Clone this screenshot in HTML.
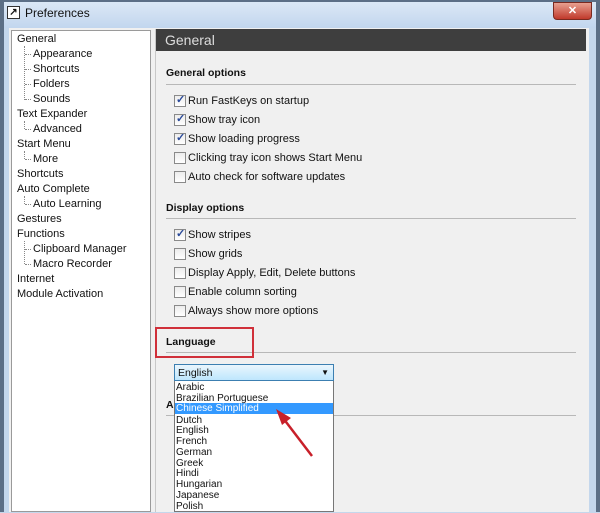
<!DOCTYPE html><html><head><style>
*{margin:0;padding:0;box-sizing:border-box}
body{width:600px;height:512px;overflow:hidden;position:relative;background:#c4d7ec;font-family:"Liberation Sans",sans-serif;font-size:11px;color:#111}
.a{position:absolute;white-space:nowrap}
.cb{position:absolute;width:12px;height:12px;border:1px solid #8a8a8a;background:linear-gradient(#ececec,#fff);margin-top:1px}
.cb.c::after{content:"✓";position:absolute;left:1px;top:-3px;font-size:11px;color:#2a4a9a;font-weight:bold}
.t{position:absolute;white-space:nowrap;font-size:11px;margin-top:1px}
.ln{position:absolute;border-top:1px dotted #888;width:6px;margin-top:1px}
.vl{position:absolute;border-left:1px dotted #888}
.h{position:absolute;font-weight:bold;font-size:10.5px}
.hr{position:absolute;height:1px;background:#b8b8b8;left:166px;width:410px}
.li{position:absolute;left:176px;font-size:10px;line-height:10.8px;margin-top:1px}
</style></head><body>
<div class="a" style="left:0;top:0;width:4px;height:512px;background:#5c6f86"></div>
<div class="a" style="left:596px;top:0;width:4px;height:512px;background:#5c6f86"></div>
<div class="a" style="left:0;top:0;width:600px;height:2px;background:#5c6f86"></div>
<div class="a" style="left:4px;top:2px;width:592px;height:26px;background:linear-gradient(#dbe8f6,#c2d6ee)"></div>
<div class="a" style="left:7px;top:6px;width:13px;height:13px;border:1px solid #333;background:#fff;font-size:10px;line-height:11px;text-align:center;font-weight:bold">↗</div>
<div class="a" style="left:25px;top:6px;font-size:12px">Preferences</div>
<div class="a" style="left:553px;top:2px;width:39px;height:18px;background:linear-gradient(#e8a090,#c0392b);border:1px solid #7a2a20;border-radius:0 0 4px 4px;color:#fff;text-align:center;font-weight:bold;font-size:11px;line-height:16px">✕</div>
<div class="a" style="left:9px;top:28px;width:580px;height:484px;background:#f0f0f0"></div>
<div class="a" style="left:11px;top:30px;width:140px;height:482px;background:#fff;border:1px solid #9a9a9a"></div>
<div class="t" style="left:17px;top:32px">General</div>
<div class="vl" style="left:24px;top:46px;height:54px"></div>
<div class="ln" style="left:25px;top:53px"></div><div class="t" style="left:33px;top:47px">Appearance</div>
<div class="ln" style="left:25px;top:68px"></div><div class="t" style="left:33px;top:62px">Shortcuts</div>
<div class="ln" style="left:25px;top:83px"></div><div class="t" style="left:33px;top:77px">Folders</div>
<div class="ln" style="left:25px;top:98px"></div><div class="t" style="left:33px;top:92px">Sounds</div>
<div class="t" style="left:17px;top:107px">Text Expander</div>
<div class="vl" style="left:24px;top:121px;height:8px"></div>
<div class="ln" style="left:25px;top:128px"></div><div class="t" style="left:33px;top:122px">Advanced</div>
<div class="t" style="left:17px;top:137px">Start Menu</div>
<div class="vl" style="left:24px;top:151px;height:8px"></div>
<div class="ln" style="left:25px;top:158px"></div><div class="t" style="left:33px;top:152px">More</div>
<div class="t" style="left:17px;top:167px">Shortcuts</div>
<div class="t" style="left:17px;top:182px">Auto Complete</div>
<div class="vl" style="left:24px;top:196px;height:8px"></div>
<div class="ln" style="left:25px;top:203px"></div><div class="t" style="left:33px;top:197px">Auto Learning</div>
<div class="t" style="left:17px;top:212px">Gestures</div>
<div class="t" style="left:17px;top:227px">Functions</div>
<div class="vl" style="left:24px;top:241px;height:23px"></div>
<div class="ln" style="left:25px;top:248px"></div><div class="t" style="left:33px;top:242px">Clipboard Manager</div>
<div class="ln" style="left:25px;top:263px"></div><div class="t" style="left:33px;top:257px">Macro Recorder</div>
<div class="t" style="left:17px;top:272px">Internet</div>
<div class="t" style="left:17px;top:287px">Module Activation</div>
<div class="a" style="left:155px;top:29px;width:432px;height:483px;border-left:1px solid #c8c8c8;background:#f0f0f0"></div>
<div class="a" style="left:156px;top:29px;width:430px;height:22px;background:#3e3e3e;color:#ddd;font-size:14px;line-height:22px;padding-left:9px">General</div>
<div class="h" style="left:166px;top:67px">General options</div><div class="hr" style="top:84px"></div>
<div class="cb c" style="left:174px;top:94px"></div><div class="t" style="left:188px;top:94px">Run FastKeys on startup</div>
<div class="cb c" style="left:174px;top:113px"></div><div class="t" style="left:188px;top:113px">Show tray icon</div>
<div class="cb c" style="left:174px;top:132px"></div><div class="t" style="left:188px;top:132px">Show loading progress</div>
<div class="cb" style="left:174px;top:151px"></div><div class="t" style="left:188px;top:151px">Clicking tray icon shows Start Menu</div>
<div class="cb" style="left:174px;top:170px"></div><div class="t" style="left:188px;top:170px">Auto check for software updates</div>
<div class="h" style="left:166px;top:202px">Display options</div><div class="hr" style="top:218px"></div>
<div class="cb c" style="left:174px;top:228px"></div><div class="t" style="left:188px;top:228px">Show stripes</div>
<div class="cb" style="left:174px;top:247px"></div><div class="t" style="left:188px;top:247px">Show grids</div>
<div class="cb" style="left:174px;top:266px"></div><div class="t" style="left:188px;top:266px">Display Apply, Edit, Delete buttons</div>
<div class="cb" style="left:174px;top:285px"></div><div class="t" style="left:188px;top:285px">Enable column sorting</div>
<div class="cb" style="left:174px;top:304px"></div><div class="t" style="left:188px;top:304px">Always show more options</div>
<div class="h" style="left:166px;top:336px">Language</div><div class="hr" style="top:352px"></div>
<div class="a" style="left:155px;top:327px;width:99px;height:31px;border:2px solid #d0303a"></div>
<div class="h" style="left:166px;top:399px">A</div><div class="hr" style="top:415px"></div>
<div class="a" style="left:174px;top:364px;width:160px;height:17px;border:1px solid #3c7fb1;background:linear-gradient(#eaf6fd,#bee6fd);font-size:10.5px;line-height:16px;padding-left:3px">English<span style="position:absolute;right:4px;top:0;font-size:8px">▼</span></div>
<div class="a" style="left:174px;top:381px;width:160px;height:131px;background:#fff;border:1px solid #777;border-top:none"></div>
<div class="a" style="left:175px;top:403px;width:158px;height:11px;background:#3399ff"></div>
<div class="li" style="top:382px">Arabic</div>
<div class="li" style="top:393px">Brazilian Portuguese</div>
<div class="li" style="top:403px;color:#fff">Chinese Simplified</div>
<div class="li" style="top:415px">Dutch</div>
<div class="li" style="top:425px">English</div>
<div class="li" style="top:436px">French</div>
<div class="li" style="top:447px">German</div>
<div class="li" style="top:458px">Greek</div>
<div class="li" style="top:468px">Hindi</div>
<div class="li" style="top:479px">Hungarian</div>
<div class="li" style="top:490px">Japanese</div>
<div class="li" style="top:501px">Polish</div>
<svg class="a" style="left:0;top:0" width="600" height="512"><line x1="312" y1="456" x2="283" y2="418" stroke="#c8202a" stroke-width="2.5"/><polygon points="276,409 291,418 282,425" fill="#c8202a"/></svg>
</body></html>
